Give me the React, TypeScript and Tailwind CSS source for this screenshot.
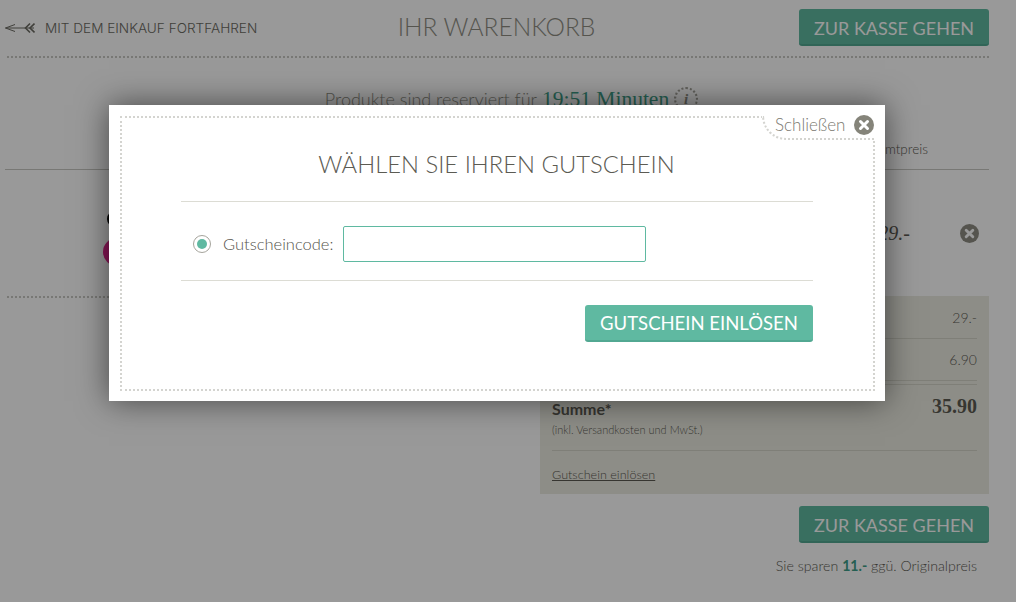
const ArrowBack = () => (
  <svg width="30" height="12" viewBox="0 0 30 12" fill="none" stroke="currentColor" strokeWidth="1">
    <path d="M0.5 6 H29" />
    <path d="M0.5 6 L10 2.5 M0.5 6 L10 9.5" />
    <path d="M25 1.5 L20.5 6 L25 10.5 M29.5 1.5 L25 6 L29.5 10.5" strokeWidth="1.6" />
  </svg>
);

const CloseIcon = ({ className }: { className: string }) => (
  <svg viewBox="0 0 20 20" className={className}>
    <circle cx="10" cy="10" r="10" fill="currentColor" />
    <path d="M6.5 6.5 L13.5 13.5 M13.5 6.5 L6.5 13.5" stroke="#fff" strokeWidth="3" strokeLinecap="round" />
  </svg>
);

const GreenButton = ({ label }: { label: string }) => (
  <button className="h-[37px] w-[190px] rounded-[3px] border-b-2 border-[#52a892] bg-[#5fb9a1] pt-[3px] text-[18px] font-normal leading-none text-[#fff] font-['Lato',sans-serif]">
    {label}
  </button>
);

export default function App() {
  return (
    <div className="relative h-[602px] w-[1016px] overflow-hidden bg-white font-['Lato',sans-serif] font-light text-[#5c5b53]">
      {/* page behind overlay */}
      <div className="pl-[7px] pr-[27px]">
        <header className="grid h-[58px] grid-cols-[1fr_auto_1fr] items-center border-b-2 border-dotted border-[#c8c8c4] pb-[2px]">
          <a className="-ml-[2px] mt-[3px] flex items-center gap-[10px] text-[13.6px] font-light uppercase text-[#6b6a62] font-['Inter',sans-serif]">
            <ArrowBack />
            MIT DEM EINKAUF FORTFAHREN
          </a>
          <h1 className="mt-[1px] -ml-[3px] text-[24.5px] uppercase text-[#8e8d83]">Ihr Warenkorb</h1>
          <div className="justify-self-end">
            <GreenButton label="ZUR KASSE GEHEN" />
          </div>
        </header>

        <div className="mt-[25px] flex h-[32px] items-center justify-center gap-[5px] pl-[27px] text-[18px] text-[#8e8d83]">
          <span>Produkte sind reserviert für</span>
          <span className="font-['Liberation_Serif',serif] text-[21.5px] font-normal text-[#3f9f89]">19:51 Minuten</span>
          <span className="flex h-[24px] w-[24px] items-center justify-center rounded-full border-2 border-dotted border-[#a5a49c] font-['Liberation_Serif',serif] text-[15px] font-bold italic">i</span>
        </div>

        <div className="-ml-[2px] flex h-[55px] items-center justify-end border-b border-[#c8c8c4] pb-[2px] pt-[16px] pr-[61px] text-[13.5px]">
          Gesamtpreis
        </div>

        <div className="flex h-[128px] border-b-2 border-dotted border-[#c8c8c4]">
          <div className="relative w-[140px]">
            <div className="absolute left-[100px] top-[40px] h-[18px] w-[18px] rounded-full bg-black" />
            <div className="absolute left-[96px] top-[68px] h-[28px] w-[28px] rounded-full bg-[#e4268f]" />
          </div>
          <div className="ml-auto flex h-[128px] items-center gap-[50px] pr-[10px]">
            <span className="-mt-[2px] font-['Liberation_Serif',serif] text-[20px] font-normal italic">29.-</span>
            <CloseIcon className="-mt-[2px] h-[19px] w-[19px] text-[#8e8d83]" />
          </div>
        </div>

        <div className="ml-auto -mt-[2px] w-[449px] bg-[#ecece2] px-[12px] text-[14px]">
          <div className="flex h-[43px] items-center justify-end border-b border-[#d4d4c8]">
            <span>29.-</span>
          </div>
          <div className="flex h-[42px] items-center justify-end border-b border-[#d4d4c8]">
            <span>6.90</span>
          </div>
          <div className="mt-[3px] flex h-[67px] justify-between border-t border-b border-[#d4d4c8]">
            <div className="pt-[13px]">
              <div className="text-[16px] font-bold leading-[22px]">Summe*</div>
              <div className="mt-[3px] text-[11px] leading-[14px]">(inkl. Versandkosten und MwSt.)</div>
            </div>
            <span className="pt-[6px] font-['Liberation_Serif',serif] text-[20px] font-bold">35.90</span>
          </div>
          <div className="h-[43px] pt-[12px]">
            <a className="text-[12.6px] underline">Gutschein einlösen</a>
          </div>
        </div>

        <div className="mt-[12px] flex justify-end">
          <GreenButton label="ZUR KASSE GEHEN" />
        </div>
        <p className="mt-[12px] pr-[12px] text-right text-[14.2px]">
          Sie sparen <span className="font-bold text-[#3f9f89]">11.-</span> ggü. Originalpreis
        </p>
      </div>

      {/* overlay */}
      <div className="absolute inset-0 bg-black/40" />

      {/* modal */}
      <div className="absolute left-[109px] top-[105px] h-[296px] w-[776px] bg-white p-[11px] shadow-[0_0_30px_rgba(0,0,0,0.55)]">
        <div className="relative h-[275px] w-[755px] border-2 border-dotted border-[#d4d4d0] pl-[59px] pr-[60px]">
          <div className="absolute -right-[2px] -top-[2px] flex h-[24px] w-[113px] items-center gap-[9px] rounded-bl-[24px] border-b-2 border-l-2 border-dotted border-[#d4d4d0] bg-white pl-[11px]">
            <span className="-mt-[4px] text-[17px] text-[#7a7970]">Schließen</span>
            <CloseIcon className="-mt-[5px] h-[20px] w-[20px] text-[#85847a]" />
          </div>

          <h2 className="pt-[30px] text-center -ml-[1px] text-[23.8px] uppercase leading-[32px] text-[#5c5b53]">
            Wählen Sie Ihren Gutschein
          </h2>

          <div className="mt-[21px] flex h-[80px] items-center border-y border-[#dcdcd4] pl-[12px] pt-[6px]">
            <span className="flex h-[18px] w-[18px] items-center justify-center rounded-full border border-[#a5a49c]">
              <span className="h-[10px] w-[10px] rounded-full bg-[#5fb9a1]" />
            </span>
            <label className="ml-[12px] text-[16.5px] text-[#55544c]">Gutscheincode:</label>
            <input className="ml-[10px] h-[36px] w-[303px] rounded-[2px] border border-[#5fb9a1] outline-none" />
          </div>

          <div className="mt-[24px] flex justify-end">
            <button className="h-[37px] w-[228px] rounded-[3px] border-b-2 border-[#52a892] bg-[#5fb9a1] pt-[2px] text-[18.5px] font-normal leading-none text-white">
              GUTSCHEIN EINLÖSEN
            </button>
          </div>
        </div>
      </div>
    </div>
  );
}
